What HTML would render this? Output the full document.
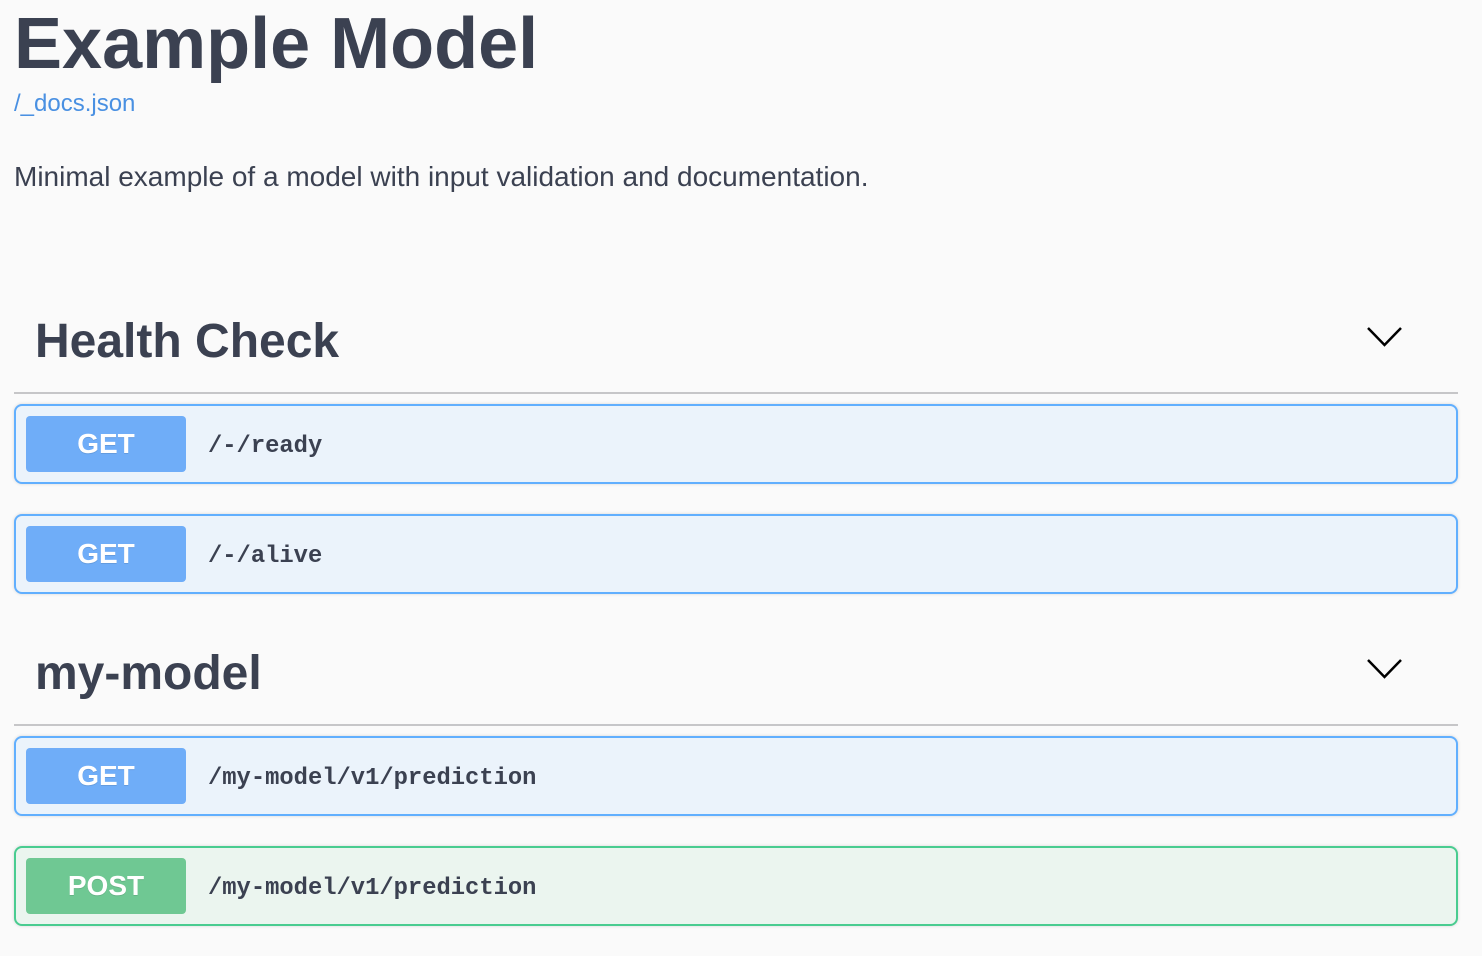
<!DOCTYPE html>
<html><head><style>
body{margin:0;background:#fafafa;font-family:"Liberation Sans",sans-serif;color:#3b4151;width:1482px;height:956px;overflow:hidden;position:relative}
.a{position:absolute}
h1{position:absolute;left:14px;top:4px;margin:0;font-size:72px;font-weight:bold;line-height:80px}
.link{left:14px;top:90px;font-size:24px;color:#4990e2}
.desc{left:14px;top:161px;font-size:28px}
.h2{left:35px;font-size:48px;font-weight:bold;line-height:60px}
.hr{left:14px;width:1444px;height:2px;background:#c6c6c8}
.chev{left:1367px}
.op{left:14px;width:1440px;height:76px;border:2px solid #61affe;background:#ebf3fb;border-radius:8px;box-shadow:0 0 3px rgba(0,0,0,.15)}
.op.post{border-color:#49cc90;background:#ebf5ef}
.btn{position:absolute;left:10px;top:10px;width:160px;height:56px;border-radius:4px;background:#6fadf8;color:#fff;font-weight:bold;font-size:28px;line-height:56px;text-align:center;text-shadow:0 1px 0 rgba(0,0,0,.1)}
.post .btn{background:#6fc893}
.path{position:absolute;left:192px;top:3px;line-height:76px;font-family:"Liberation Mono",monospace;font-weight:bold;font-size:23.8px}
</style></head><body>
<h1>Example Model</h1>
<div class="a link">/_docs.json</div>
<div class="a desc">Minimal example of a model with input validation and documentation.</div>
<div class="a h2" style="top:312px">Health Check</div>
<svg class="a chev" style="top:326px" width="36" height="22"><path d="M1 2 L17.5 19 L34 2" fill="none" stroke="#000" stroke-width="2.5"/></svg>
<div class="a hr" style="top:392px"></div>
<div class="a op" style="top:404px"><div class="btn">GET</div><div class="path">/-/ready</div></div>
<div class="a op" style="top:514px"><div class="btn">GET</div><div class="path">/-/alive</div></div>
<div class="a h2" style="top:644px">my-model</div>
<svg class="a chev" style="top:658px" width="36" height="22"><path d="M1 2 L17.5 19 L34 2" fill="none" stroke="#000" stroke-width="2.5"/></svg>
<div class="a hr" style="top:724px"></div>
<div class="a op" style="top:736px"><div class="btn">GET</div><div class="path">/my-model/v1/prediction</div></div>
<div class="a op post" style="top:846px"><div class="btn">POST</div><div class="path">/my-model/v1/prediction</div></div>
</body></html>
